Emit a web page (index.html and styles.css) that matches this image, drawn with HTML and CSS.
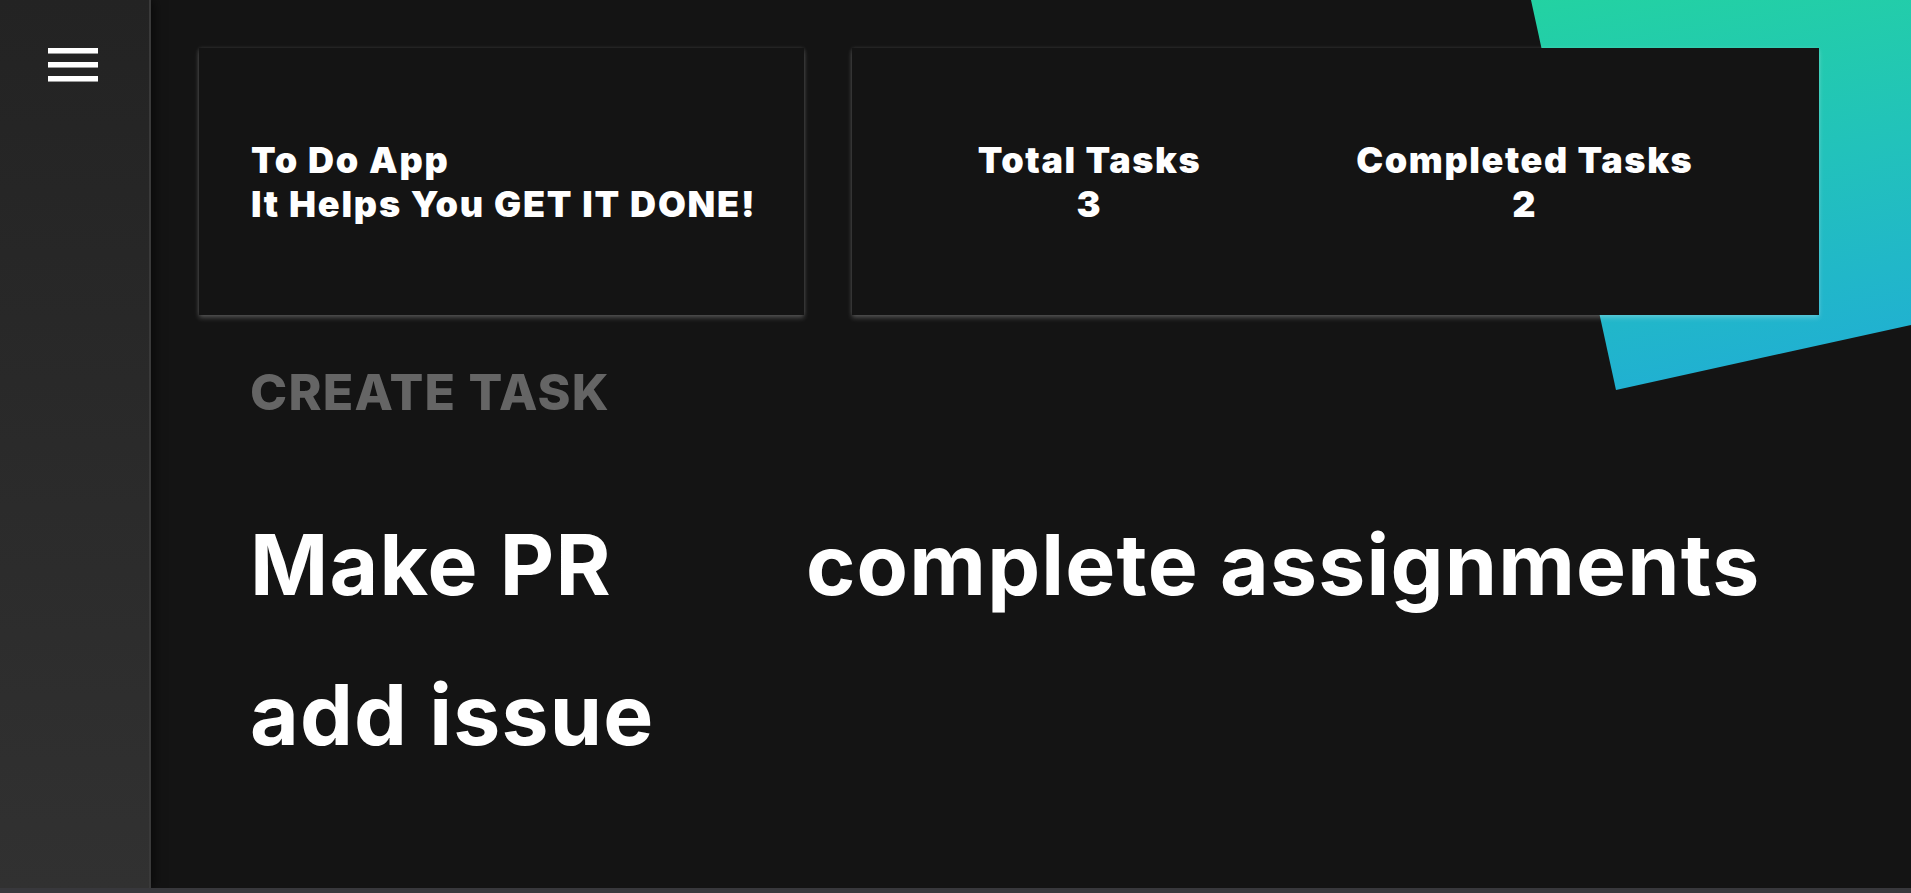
FILE: index.html
```html
<!DOCTYPE html>
<html lang="en">
<head>
<meta charset="utf-8">
<title>To Do App</title>
<link rel="stylesheet" href="styles.css">
</head>
<body>
<div class="app">
  <aside class="sidebar">
    <button class="menu" aria-label="Menu">
      <span class="bar"></span>
      <span class="bar"></span>
      <span class="bar"></span>
    </button>
  </aside>
  <main class="main">
    <div class="decor"></div>
    <section class="cards">
      <div class="card card-intro">
        <p class="card-text intro-text">To Do App<br>It Helps You GET IT DONE!</p>
      </div>
      <div class="card card-stats">
        <div class="stat">
          <div class="card-text">Total Tasks</div>
          <div class="card-text">3</div>
        </div>
        <div class="stat">
          <div class="card-text">Completed Tasks</div>
          <div class="card-text">2</div>
        </div>
      </div>
    </section>
    <h2 class="create">CREATE TASK</h2>
    <ul class="tasks">
      <li class="task">Make PR</li>
      <li class="task">complete assignments</li>
      <li class="task">add issue</li>
    </ul>
  </main>
</div>
</body>
</html>
```

FILE: styles.css
```css
html, body {
  margin: 0;
  padding: 0;
}
body {
  background: #38383c;
  font-family: Inter, "Open Sans", "DejaVu Sans", sans-serif;
  color: #ffffff;
}
.app {
  display: flex;
  height: 888px;
  overflow: hidden;
}
.sidebar {
  width: 151px;
  flex: 0 0 151px;
  background: linear-gradient(to bottom, #232323, #313131);
  border-right: 2px solid #3a3a3a;
  box-sizing: border-box;
  box-shadow: 3px 0 10px rgba(0, 0, 0, 0.55);
  position: relative;
  z-index: 2;
  padding-top: 48px;
}
.menu {
  display: flex;
  flex-direction: column;
  gap: 9px;
  margin: 0 0 0 48px;
  padding: 0;
  background: none;
  border: 0;
}
.bar {
  display: block;
  width: 50px;
  height: 5px;
  background: #ffffff;
  box-shadow: 0 1px 0 #9a9a9a;
}
.main {
  flex: 1;
  position: relative;
  background: #141414;
  padding: 48px 0 0 48px;
  box-sizing: border-box;
}
.decor {
  position: absolute;
  left: 1380px;
  top: 0;
  width: 380px;
  height: 390px;
  background: linear-gradient(170deg, #23d2a2 0%, #22c2bb 45%, #20acd7 100%);
  clip-path: polygon(0 0, 380px 0, 380px 325px, 85px 390px);
  z-index: 0;
}
.cards {
  position: relative;
  z-index: 1;
  display: grid;
  grid-template-columns: 605px 967px;
  gap: 48px;
  height: 267px;
}
.card {
  background: #141414;
  box-shadow: 0 3px 5px rgba(255, 255, 255, 0.22), 0 0 4px rgba(255, 255, 255, 0.12);
  display: flex;
  align-items: center;
}
.card-intro {
  padding-left: 52px;
}
.card-text {
  margin: 0;
  font-size: 36px;
  font-weight: 900;
  letter-spacing: 1.6px;
  line-height: 44px;
  white-space: nowrap;
}
.intro-text {
  letter-spacing: 1.8px;
}
.card-stats {
  justify-content: center;
  gap: 155px;
}
.stat {
  text-align: center;
}
.create {
  margin: 48px 0 0 51px;
  font-size: 50px;
  font-weight: 800;
  letter-spacing: 1.2px;
  line-height: 58px;
  color: #656565;
  position: relative;
  z-index: 1;
}
.tasks {
  list-style: none;
  margin: 96px 0 0 51px;
  padding: 0;
  display: grid;
  grid-template-columns: 556px auto;
  row-gap: 54px;
  justify-content: start;
}
.task {
  font-size: 84px;
  font-weight: 700;
  letter-spacing: 1.2px;
  line-height: 96px;
  white-space: nowrap;
}
```
